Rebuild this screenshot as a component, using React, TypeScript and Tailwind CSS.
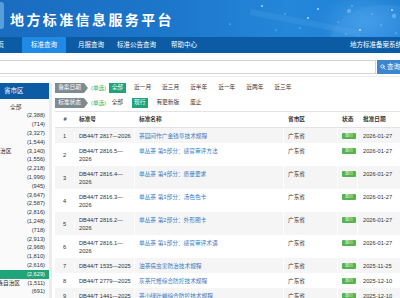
import React from "react";

const counts = [
  "2,388", "714", "3,327", "1,544", "3,140", "1,556", "2,218", "1,996", "945", "3,647", "2,587",
  "2,816", "1,248", "718", "2,913", "2,968", "1,810", "2,616", "2,629", "1,511", "691",
];

const rows = [
  { n: 1, code: ["DB44/T 2817—2026"], name: "茶园间作广金钱草技术规程", date: "2026-01-27" },
  { n: 2, code: ["DB44/T 2816.5—", "2026"], name: "单丛茶 第5部分：感官审评方法", date: "2026-01-27" },
  { n: 3, code: ["DB44/T 2816.4—", "2026"], name: "单丛茶 第4部分：质量要求", date: "2026-01-27" },
  { n: 4, code: ["DB44/T 2816.3—", "2026"], name: "单丛茶 第3部分：汤色色卡", date: "2026-01-27" },
  { n: 5, code: ["DB44/T 2816.2—", "2026"], name: "单丛茶 第2部分：外形图卡", date: "2026-01-27" },
  { n: 6, code: ["DB44/T 2816.1—", "2026"], name: "单丛茶 第1部分：感官审评术语", date: "2026-01-27" },
  { n: 7, code: ["DB44/T 1535—2025"], name: "油茶病虫害防治技术规程", date: "2025-11-25" },
  { n: 8, code: ["DB44/T 2779—2025"], name: "灰茶尺蠖综合防控技术规程", date: "2025-12-10" },
  { n: 9, code: ["DB44/T 1441—2025"], name: "茶小绿叶蝉综合防控技术规程", date: "2025-12-10" },
];

function Tag({ children }: { children: React.ReactNode }) {
  return (
    <div className="flex items-center h-[10px]">
      <div className="h-[10px] w-[29px] bg-[#7f8b92] text-white flex items-center justify-center leading-none">
        {children}
      </div>
      <div className="w-0 h-0 border-y-[5px] border-y-transparent border-l-[4px] border-l-[#7f8b92]" />
    </div>
  );
}

function Opt({ children, active }: { children: React.ReactNode; active?: boolean }) {
  return (
    <div
      className={
        active
          ? "h-[10px] px-[2.5px] flex items-center bg-[#21a47a] text-white leading-none"
          : "h-[10px] px-[2.5px] flex items-center text-[#333] leading-none"
      }
    >
      {children}
    </div>
  );
}

const gridCols = "grid grid-cols-[20px_60px_149px_54px_20px_60px]";

export default function App() {
  return (
    <div className="w-[400px] h-[298px] overflow-hidden bg-white font-['Liberation_Sans','Noto_Sans_CJK_SC',sans-serif] text-[#333]">
      {/* Header */}
      <header className="relative h-[37px] flex items-center overflow-hidden bg-[linear-gradient(90deg,#1a6cc0_0%,#1c76ca_40%,#2487da_72%,#1f80d4_100%)]">
        <svg className="absolute left-0 top-0" width="400" height="37" viewBox="0 0 400 37">
          <defs>
            <radialGradient id="glow" cx="0.5" cy="0.5" r="0.5">
              <stop offset="0%" stopColor="#5fb0f5" stopOpacity="0.55" />
              <stop offset="100%" stopColor="#5fb0f5" stopOpacity="0" />
            </radialGradient>
          </defs>
          <ellipse cx="365" cy="22" rx="45" ry="30" fill="url(#glow)" />
          <path d="M330 37 C340 10 370 2 400 6 L400 37 Z" fill="#4aa3ee" opacity="0.25" />
          <path d="M250 12 C290 20 330 26 360 34" stroke="#8cc8f7" strokeWidth="6" opacity="0.12" fill="none" />
          {[
            [262, 6], [285, 14], [300, 28], [318, 9], [338, 22], [352, 6], [360, 30], [372, 14],
            [381, 25], [392, 10], [396, 33], [346, 34], [308, 18], [276, 30], [230, 24],
          ].map(([x, y], i) => (
            <circle key={i} cx={x} cy={y} r={i % 3 === 0 ? 0.9 : 0.6} fill="#ffffff" opacity={0.75} />
          ))}
          <circle cx="349" cy="11" r="2.2" fill="#ffffff" opacity="0.25" />
          <circle cx="394" cy="16" r="2.2" fill="#ffffff" opacity="0.25" />
        </svg>
        <div className="relative self-start mt-[2px] w-[4px] h-[27px] rounded-r-[3px] bg-[#5a9ddc]" />
        <h1 className="relative ml-[6px] text-white font-bold text-[14px] tracking-[2.4px] leading-none font-['Noto_Sans_CJK_SC',sans-serif]">
          地方标准信息服务平台
        </h1>
      </header>

      {/* Nav */}
      <nav className="h-[16px] bg-[#0b5ca4] flex items-stretch text-white text-[6.5px] whitespace-nowrap">
        <div className="flex items-center -ml-[2.5px]">页</div>
        <div className="flex items-center ml-[18px] px-[9px] bg-[#1f8ae6]">标准查询</div>
        <div className="flex items-center ml-[12px]">月报查询</div>
        <div className="flex items-center ml-[13px]">标准公告查询</div>
        <div className="flex items-center ml-[15px]">帮助中心</div>
        <div className="flex items-center ml-auto shrink-0 -mr-[2px]">地方标准备案系统</div>
      </nav>

      {/* Search */}
      <div className="flex pt-[7px] pb-[2px] border-b border-[#ececec]">
        <div className="flex-1 h-[14px] border border-l-0 border-[#d4d4d4] bg-white" />
        <div className="ml-[1px] w-[23px] h-[14px] bg-[#3b87cf] flex items-center gap-[1px] pl-[3px] text-white text-[6.5px] whitespace-nowrap overflow-hidden">
          <svg width="6" height="6" viewBox="0 0 24 24" fill="none" stroke="white" strokeWidth="3.2" strokeLinecap="round">
            <circle cx="10" cy="10" r="6.5" />
            <path d="M15 15l6 6" />
          </svg>
          <span>查询</span>
        </div>
      </div>

      {/* Content */}
      <div className="flex pt-[6px] text-[5.7px]">
        {/* Sidebar */}
        <aside className="w-[49px] shrink-0 bg-[#fafafa]">
          <div className="h-[16px] bg-[#0b5ca4] text-white text-[6.5px] flex items-center pl-[4px]">省市区</div>
          <div className="pt-[3.6px]">
            <div className="h-[8.8px] leading-[8.8px] pl-[10px]">全部</div>
            {counts.map((c, i) => {
              const hl = i === 18;
              return (
                <div
                  key={i}
                  className={
                    hl
                      ? "h-[8.8px] leading-[8.8px] flex items-center bg-[#21a47a] text-white pr-[4px] overflow-hidden whitespace-nowrap"
                      : "h-[8.8px] leading-[8.8px] flex items-center pr-[4px] overflow-hidden whitespace-nowrap"
                  }
                >
                  {i === 4 && <span className="-ml-[22.8px]">内蒙古自治区</span>}
                  {i === 19 && <span className="-ml-[19.8px]">广西壮族自治区</span>}
                  <span className="ml-auto">({c})</span>
                </div>
              );
            })}
          </div>
        </aside>
        <div className="w-[3px] shrink-0 bg-[#ececec]" />

        {/* Main */}
        <main className="flex-1 pl-[3px] min-w-0">
          <div className="flex items-center h-[10px] whitespace-nowrap">
            <Tag>备案日期</Tag>
            <span className="ml-[3px] text-[#4cae4c]">(单选)</span>
            <div className="ml-[3px] flex gap-[6px]">
              <Opt active>全部</Opt>
              <Opt>近一月</Opt>
              <Opt>近三月</Opt>
              <Opt>近半年</Opt>
              <Opt>近一年</Opt>
              <Opt>近两年</Opt>
              <Opt>近三年</Opt>
            </div>
          </div>
          <div className="flex items-center h-[10px] mt-[5px] whitespace-nowrap">
            <Tag>标准状态</Tag>
            <span className="ml-[3px] text-[#4cae4c]">(单选)</span>
            <div className="ml-[3px] flex gap-[6px]">
              <Opt>全部</Opt>
              <Opt active>现行</Opt>
              <Opt>有更新版</Opt>
              <Opt>废止</Opt>
            </div>
          </div>

          {/* Table */}
          <div className="mt-[3px] w-[363px]">
            <div className={`${gridCols} h-[17px] items-center font-bold border-t border-b border-[#e3e3e3] whitespace-nowrap`}>
              <div className="text-center">#</div>
              <div className="pl-[4px]">标准号</div>
              <div className="pl-[4px]">标准名称</div>
              <div className="pl-[4px]">省市区</div>
              <div className="pl-[4px]">状态</div>
              <div className="pl-[5px]">批准日期</div>
            </div>
            {rows.map((r) => (
              <div
                key={r.n}
                className={`${gridCols} leading-[8px] whitespace-nowrap ${r.n % 2 === 1 ? "bg-[#f5f5f5]" : "bg-white"}`}
              >
                <div className="text-center self-center border-r border-white">{r.n}</div>
                <div className="pl-[4px] py-[3.5px] border-r border-white">
                  {r.code.map((l, i) => (
                    <div key={i}>{l}</div>
                  ))}
                </div>
                <div className="pl-[4px] py-[3.5px] text-[#3a7cc2] border-r border-white">{r.name}</div>
                <div className="pl-[4px] py-[3.5px] border-r border-white">广东省</div>
                <div className="pl-[4px] pt-[4.5px] border-r border-white">
                  <div className="w-[14px] h-[6px] bg-[#52b552] text-white text-[4px] leading-[6px] text-center rounded-[1px]">
                    现行
                  </div>
                </div>
                <div className="pl-[5px] py-[3.5px]">{r.date}</div>
              </div>
            ))}
          </div>
        </main>
      </div>
    </div>
  );
}
